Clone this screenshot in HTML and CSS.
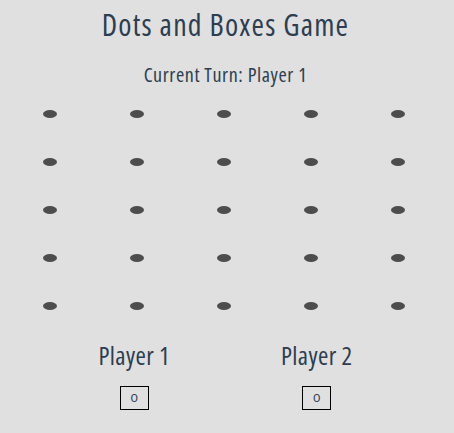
FILE: index.html
```html
<!DOCTYPE html>
<html>
<head>
<meta charset="utf-8">
<link rel="stylesheet" href="styles.css">
</head>
<body>
<div class="game">
  <h1 class="title">Dots and Boxes Game</h1>
  <p class="turn">Current Turn: Player 1</p>
  <div class="board">
    <div class="row"><span class="dot"></span><span class="dot"></span><span class="dot"></span><span class="dot"></span><span class="dot"></span></div>
    <div class="row"><span class="dot"></span><span class="dot"></span><span class="dot"></span><span class="dot"></span><span class="dot"></span></div>
    <div class="row"><span class="dot"></span><span class="dot"></span><span class="dot"></span><span class="dot"></span><span class="dot"></span></div>
    <div class="row"><span class="dot"></span><span class="dot"></span><span class="dot"></span><span class="dot"></span><span class="dot"></span></div>
    <div class="row"><span class="dot"></span><span class="dot"></span><span class="dot"></span><span class="dot"></span><span class="dot"></span></div>
  </div>
  <div class="scores">
    <div class="player">
      <h2 class="pname">Player 1</h2>
      <div class="score">0</div>
    </div>
    <div class="player">
      <h2 class="pname">Player 2</h2>
      <div class="score">0</div>
    </div>
  </div>
</div>
</body>
</html>
```
FILE: styles.css
```css
html, body {
  margin: 0;
  padding: 0;
  background: #e0e0e0;
}
body {
  font-family: "Open Sans", sans-serif;
  font-stretch: 75%;
  font-weight: 400;
  color: #2c3e50;
}
.game {
  width: 365px;
  margin-left: 43px;
}
.title {
  margin: 0;
  padding-top: 8px;
  font-size: 30px;
  font-weight: 400;
  letter-spacing: 1.2px;
  line-height: 34px;
  text-align: center;
}
.turn {
  margin: 0;
  padding-top: 22px;
  font-size: 20px;
  letter-spacing: 0.6px;
  line-height: 22px;
  text-align: center;
}
.board {
  display: flex;
  flex-direction: column;
  gap: 40px;
  padding-top: 24px;
}
.row {
  display: flex;
  gap: 73px;
}
.dot {
  display: block;
  width: 14px;
  height: 8px;
  border-radius: 50%;
  background: #4d4d4d;
}
.scores {
  display: flex;
  justify-content: space-around;
  padding-top: 30px;
}
.player {
  display: flex;
  flex-direction: column;
  align-items: center;
}
.pname {
  margin: 0;
  font-size: 25px;
  font-weight: 400;
  letter-spacing: 0.4px;
  line-height: 30px;
}
.score {
  margin-top: 16px;
  width: 27px;
  height: 22px;
  border: 1px solid #000;
  font-family: "Lato", sans-serif;
  font-stretch: normal;
  font-weight: normal;
  font-size: 12px;
  letter-spacing: 0;
  line-height: 22px;
  text-align: center;
}
```
